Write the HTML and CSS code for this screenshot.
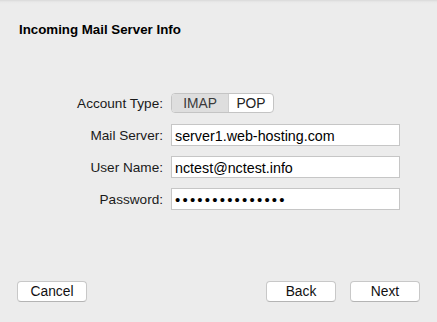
FILE: index.html
```html
<!DOCTYPE html>
<html lang="en">
<head>
  <meta charset="UTF-8" />
  <title>Incoming Mail Server Info</title>
  <link rel="stylesheet" href="styles.css">
</head>
<body>
  <div class="sheet">
    <h1 class="title">Incoming Mail Server Info</h1>

    <div class="form">
      <label class="label">Account Type:</label>
      <div class="field">
        <div class="segmented">
          <span class="seg seg-on">IMAP</span>
          <span class="seg">POP</span>
        </div>
      </div>

      <label class="label">Mail Server:</label>
      <div class="field"><input class="input" type="text" value="server1.web-hosting.com"></div>

      <label class="label">User Name:</label>
      <div class="field"><input class="input" type="text" value="nctest@nctest.info"></div>

      <label class="label">Password:</label>
      <div class="field"><div class="input dots">&#8226;&#8226;&#8226;&#8226;&#8226;&#8226;&#8226;&#8226;&#8226;&#8226;&#8226;&#8226;&#8226;&#8226;&#8226;</div></div>
    </div>

    <!-- bottom buttons -->
    <div class="actions">
      <button class="btn">Cancel</button>
      <div class="actions-right">
        <button class="btn">Back</button>
        <button class="btn">Next</button>
      </div>
    </div>
  </div>
</body>
</html>
```

FILE: styles.css
```css
body {
  margin: 0;
  font-family: 'Liberation Sans', Arial, sans-serif;
  font-size: 13.6px;
  color: #111;
  background: #ececec;
}

.sheet {
  height: 322px;
  box-sizing: border-box;
  display: flex;
  flex-direction: column;
  background: linear-gradient(#d9d9d9, #e9e9e9 2px, #ececec 4px);
  padding: 0 17px 20px 17px;
}

.title {
  margin: 0;
  padding: 22px 0 0 2px;
  font-size: 13.3px;
  line-height: 16px;
  font-weight: bold;
  color: #000;
}

.form {
  display: grid;
  grid-template-columns: 146px 229px;
  grid-auto-rows: 22px;
  column-gap: 8px;
  row-gap: 10px;
  margin-top: 54px;
}

.label {
  display: flex;
  align-items: center;
  justify-content: flex-end;
  color: #1a1a1a;
  padding-top: 1px;
}

.field {
  display: flex;
  align-items: center;
}

.segmented {
  display: flex;
  height: 20px;
  box-sizing: border-box;
  border: 1px solid #c4c4c4;
  border-radius: 4px;
  overflow: hidden;
  background: #fff;
}

.seg {
  display: flex;
  align-items: center;
  justify-content: center;
  width: 44px;
  color: #222;
  font-size: 13.8px;
}

.seg-on {
  width: 56px;
  background: #dedede;
  border-right: 1px solid #cfcfcf;
  color: #3a3a3a;
}

.input {
  width: 100%;
  height: 22px;
  box-sizing: border-box;
  margin: 0;
  border: 1px solid #c6c6c6;
  background: #fff;
  padding: 1px 3px 0 3px;
  font-family: inherit;
  font-size: 14.3px;
  color: #000;
  outline: none;
}

.dots {
  display: flex;
  align-items: center;
  font-size: 15px;
  letter-spacing: 2.2px;
  padding-left: 3px;
}

.actions {
  margin-top: auto;
  display: flex;
  justify-content: space-between;
}

.actions-right {
  display: flex;
  gap: 14px;
}

.btn {
  width: 70px;
  height: 21px;
  margin: 0;
  padding: 0;
  border: 1px solid #c8c8c8;
  border-bottom-color: #b4b4b4;
  border-radius: 4px;
  background: #fff;
  font-family: inherit;
  font-size: 13.8px;
  color: #111;
}
```
